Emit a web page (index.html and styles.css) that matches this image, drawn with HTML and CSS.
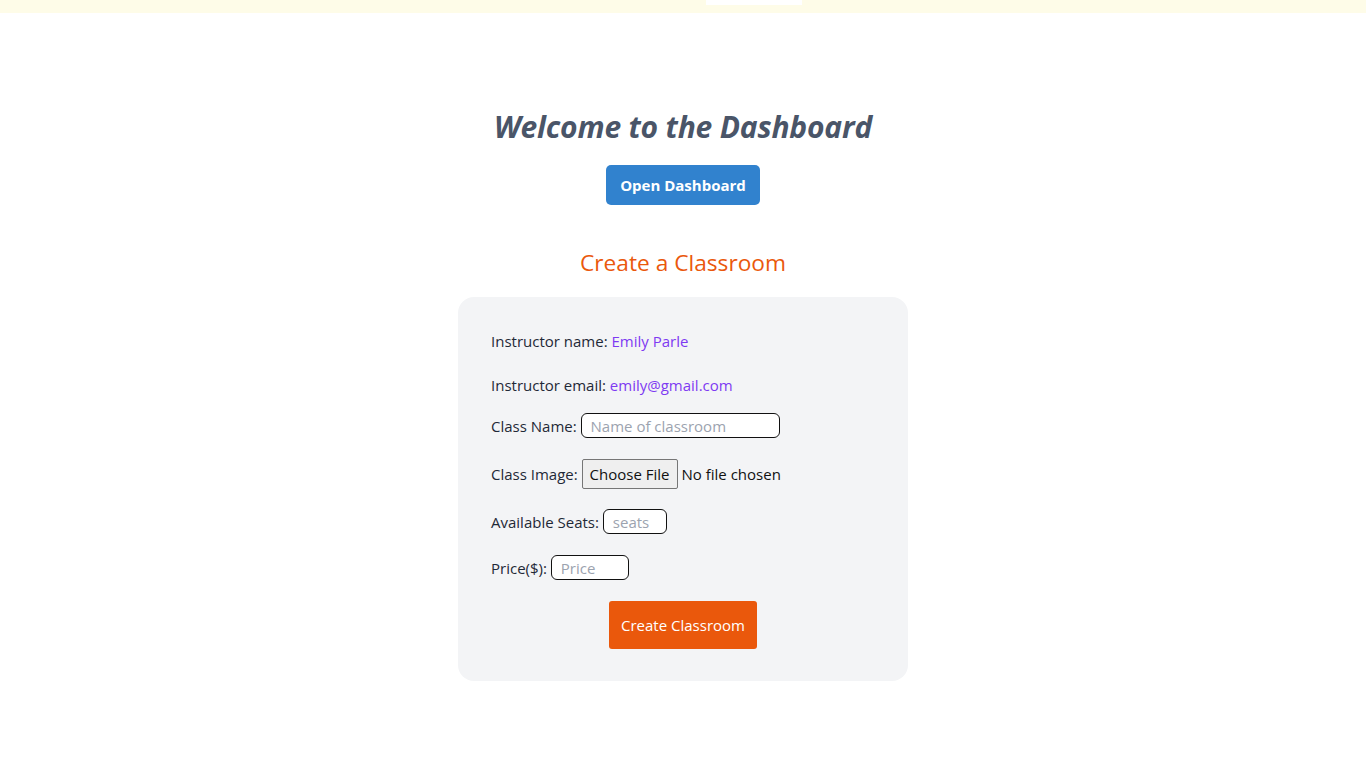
FILE: index.html
```html
<!DOCTYPE html>
<html lang="en">
<head>
<meta charset="utf-8">
<title>Dashboard</title>
<link rel="stylesheet" href="styles.css">
</head>
<body>
  <header class="topbar">
    <div class="topbar-slot"></div>
  </header>
  <main class="page">
    <h1 class="title">Welcome to the Dashboard</h1>
    <button class="btn-open" type="button">Open Dashboard</button>
    <h2 class="subtitle">Create a Classroom</h2>
    <form class="card">
      <p class="row text-row">Instructor name: <span class="value">Emily Parle</span></p>
      <p class="row text-row">Instructor email: <span class="value">emily@gmail.com</span></p>
      <label class="row field">Class Name: <input class="input input-name" type="text" placeholder="Name of classroom"></label>
      <label class="row field file-row">Class Image: <input class="file" type="file"></label>
      <label class="row field seats-row">Available Seats: <input class="input input-seats" type="number" placeholder="seats"></label>
      <label class="row field">Price($): <input class="input input-price" type="number" placeholder="Price"></label>
      <div class="actions">
        <button class="btn-create" type="submit">Create Classroom</button>
      </div>
    </form>
  </main>
</body>
</html>
```

FILE: styles.css
```css
* { box-sizing: border-box; }
html, body { margin: 0; padding: 0; background: #ffffff; }
body {
  font-family: "Open Sans", "Noto Sans", "Liberation Sans", sans-serif;
  color: #1f2937;
}
.topbar {
  height: 13px;
  background: #fefce8;
  display: flex;
  justify-content: center;
}
.topbar-slot {
  width: 96px;
  height: 5px;
  background: #ffffff;
  margin-left: 141px;
}
.page {
  display: flex;
  flex-direction: column;
  align-items: center;
  padding-top: 96px;
}
.title {
  margin: 0;
  font-size: 30px;
  line-height: 36px;
  font-weight: 700;
  font-style: italic;
  color: #4a5568;
  letter-spacing: -0.2px;
}
.btn-open {
  margin-top: 20px;
  width: 154px;
  height: 40px;
  border: none;
  border-radius: 5px;
  background: #3182ce;
  color: #ffffff;
  font-family: inherit;
  font-size: 15px;
  font-weight: 700;
  cursor: pointer;
}
.subtitle {
  margin: 42px 0 0;
  font-size: 22.7px;
  line-height: 32px;
  font-weight: 400;
  color: #ea580c;
}
.card {
  margin-top: 18px;
  width: 450px;
  background: #f3f4f6;
  border-radius: 16px;
  padding: 32px;
  display: flex;
  flex-direction: column;
  font-size: 15px;
}
.row {
  margin: 0;
  padding-left: 1px;
  display: flex;
  align-items: center;
  white-space: pre;
}
.text-row { height: 24px; margin-bottom: 20px; }
.text-row + .field { margin-top: -4px; }
.value { color: #7e3af2; }
.field { height: 25px; margin-bottom: 20px; }
.file-row { height: 30px; margin-top: 1px; margin-bottom: 20px; }
.seats-row { margin-bottom: 21px; }
.input {
  height: 25px;
  border: 1px solid #111111;
  border-radius: 6px;
  background: #ffffff;
  padding: 0 9px;
  font-family: inherit;
  font-size: 15px;
  color: #111827;
}
.input::placeholder { color: #9ca3af; }
.input-name { width: 199px; }
.input-seats { width: 64px; }
.input-price { width: 78px; }
input[type=number]::-webkit-inner-spin-button,
input[type=number]::-webkit-outer-spin-button { -webkit-appearance: none; margin: 0; }
.file {
  font-family: inherit;
  font-size: 15px;
  color: #111111;
}
.file::file-selector-button {
  height: 30px;
  padding: 0 7px;
  margin-right: 4px;
  font-family: inherit;
  font-size: 15px;
  color: #111111;
  background: #efefef;
  border: 1px solid #767676;
  border-radius: 2px;
}
.actions {
  display: flex;
  justify-content: center;
  margin-top: 1px;
}
.btn-create {
  width: 148px;
  height: 48px;
  border: none;
  border-radius: 3px;
  background: #ea580c;
  color: #ffffff;
  font-family: inherit;
  font-size: 15px;
  cursor: pointer;
}
```
